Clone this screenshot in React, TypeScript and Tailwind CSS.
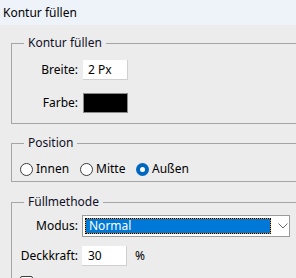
import { ReactNode } from 'react';

function Group({ title, className, children }: { title: string; className?: string; children: ReactNode }) {
  return (
    <fieldset className={`border border-[#a5a5a5] ${className ?? ''}`}>
      <legend className="ml-[12px] px-[4px] leading-[16px] text-[#101028]">{title}</legend>
      {children}
    </fieldset>
  );
}

function Radio({ label, checked, className }: { label: string; checked?: boolean; className?: string }) {
  return (
    <div className={`flex items-center gap-[3px] ${className ?? ''}`}>
      {checked ? (
        <span className="w-[13px] h-[13px] rounded-full bg-[#0067c0] flex items-center justify-center">
          <span className="w-[5px] h-[5px] rounded-full bg-white" />
        </span>
      ) : (
        <span className="w-[13px] h-[13px] rounded-full border border-[#3c3c3c] bg-white" />
      )}
      <span>{label}</span>
    </div>
  );
}

export default function App() {
  return (
    <div className="w-[296px] h-[278px] overflow-hidden bg-[#ececec] font-['Noto_Sans',sans-serif] text-[12px] text-black">
      {/* Title bar */}
      <div className="h-[25px] bg-[#eef3fa] pl-[3px] flex items-center">Kontur füllen</div>

      <div className="pl-[11px] w-[320px]">
        {/* Kontur füllen */}
        <Group title="Kontur füllen" className="mt-[10px] pt-[9px] pb-[10px]">
          <div className="flex items-center h-[20px]">
            <span className="w-[66px] text-right">Breite:</span>
            <div className="ml-[5px] w-[45px] h-[20px] bg-white border-b border-r border-[#d0d0d0] pl-[5px] flex items-center">2 Px</div>
          </div>
          <div className="flex items-center h-[20px] mt-[13px]">
            <span className="w-[66px] text-right">Farbe:</span>
            <div className="ml-[5px] w-[45px] h-[20px] bg-black border border-[#8a8a8a]" />
          </div>
        </Group>

        {/* Position */}
        <Group title="Position" className="mt-[11px] pt-[10px] pb-[4px]">
          <div className="flex items-center h-[16px] pl-[8px]">
            <Radio label="Innen" className="w-[60px]" />
            <Radio label="Mitte" className="w-[56px]" />
            <Radio label="Außen" checked />
          </div>
        </Group>

        {/* Füllmethode */}
        <Group title="Füllmethode" className="mt-[12px] pt-[5px] pb-[20px]">
          <div className="flex items-center h-[22px]">
            <span className="w-[66px] text-right">Modus:</span>
            <div className="ml-[4px] w-[208px] h-[22px] bg-white border border-[#9a9a9a] flex items-center pl-[2px]">
              <div className="w-[186px] h-[16px] border border-dotted border-black bg-[#e89a3c]">
                <div className="w-full h-full bg-[#0078d7] text-white pl-[3px] leading-[14px]">Normal</div>
              </div>
              <svg width="10" height="6" viewBox="0 0 10 6" className="ml-[7px]">
                <polyline points="0.5,0.5 5,5 9.5,0.5" fill="none" stroke="#6a6a6a" strokeWidth="1" />
              </svg>
            </div>
          </div>
          <div className="flex items-center h-[20px] mt-[9px]">
            <span className="w-[66px] text-right">Deckkraft:</span>
            <div className="ml-[4px] w-[45px] h-[20px] bg-white border-b border-r border-[#d0d0d0] pl-[6px] flex items-center">30</div>
            <span className="ml-[8px]">%</span>
          </div>
          <div className="mt-[10px] ml-[8px] w-[13px] h-[13px] rounded-[2px] border border-[#3c3c3c] bg-white" />
        </Group>
      </div>
    </div>
  );
}
